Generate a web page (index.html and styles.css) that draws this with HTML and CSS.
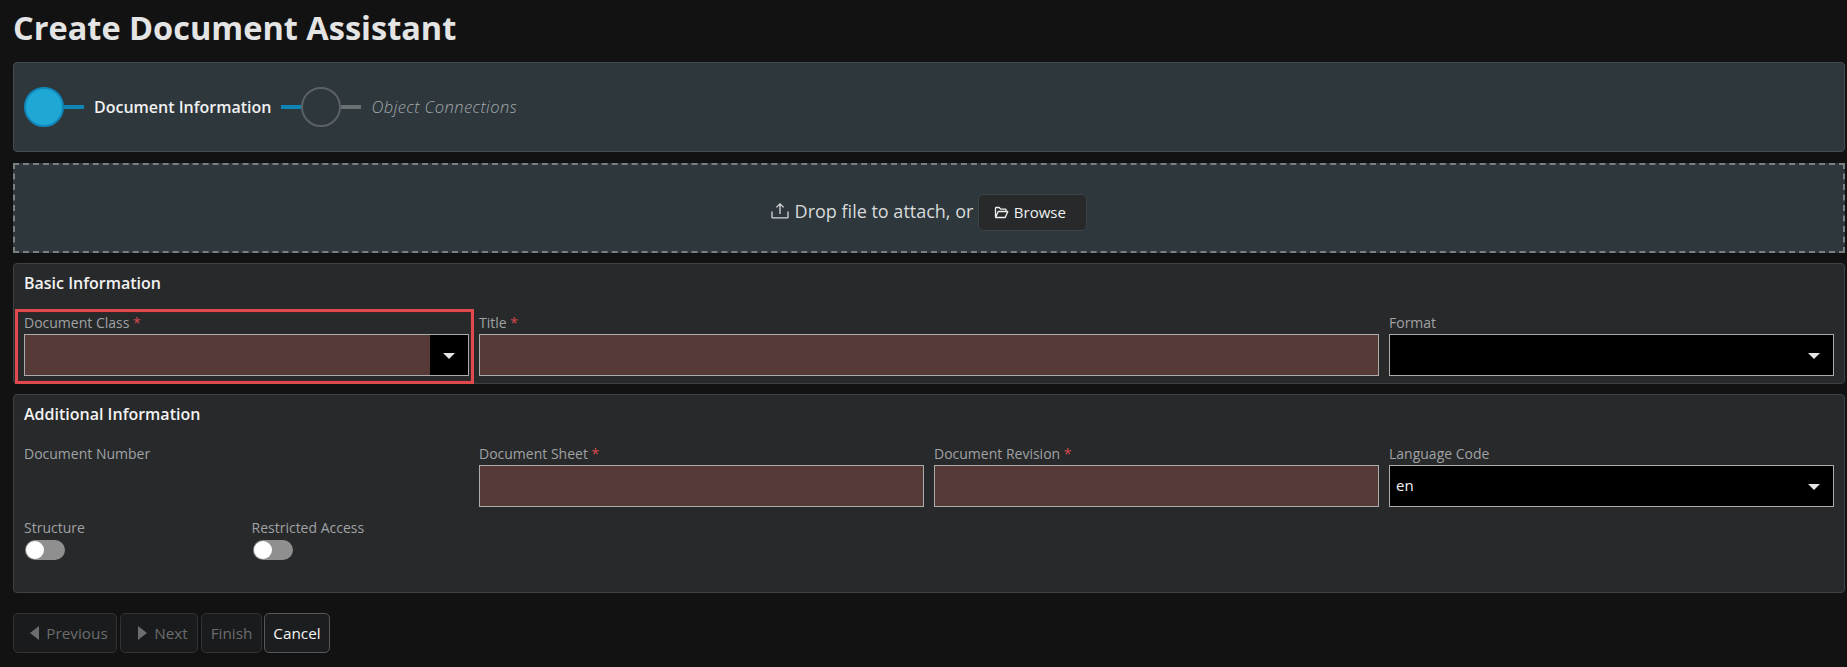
FILE: index.html
```html
<!DOCTYPE html>
<html lang="en">
<head>
<meta charset="utf-8">
<title>Create Document Assistant</title>
<link rel="stylesheet" href="styles.css">
</head>
<body>
<main class="page">
  <h1 class="page-title">Create Document Assistant</h1>

  <section class="stepper">
    <span class="step-circle step-circle-active"></span>
    <span class="step-line step-line-blue"></span>
    <span class="step-label step-label-active">Document Information</span>
    <span class="step-line step-line-blue"></span>
    <span class="step-circle"></span>
    <span class="step-line step-line-grey"></span>
    <span class="step-label step-label-next">Object Connections</span>
  </section>

  <section class="dropzone">
    <svg class="upload-icon" viewBox="0 0 18 17" width="18" height="17" aria-hidden="true">
      <path d="M9 12V2M5.4 5.4 9 1.8l3.6 3.6M1 9.5v5.7c0 .4.3.7.7.7h14.6c.4 0 .7-.3.7-.7V9.5" fill="none" stroke="currentColor" stroke-width="1.3"/>
    </svg>
    <span class="drop-text">Drop file to attach, or</span>
    <button class="browse-btn" type="button">
      <svg class="folder-icon" viewBox="0 0 15 13" width="15" height="13" aria-hidden="true">
        <path d="M1.5 10.8V2.2c0-.4.3-.7.7-.7h3l1.4 1.6h4.7c.4 0 .7.3.7.7v1.2M1.6 11.5h9.6l2.6-6H4.2z" fill="none" stroke="currentColor" stroke-width="1.3" stroke-linejoin="round"/>
      </svg>
      <span>Browse</span>
    </button>
  </section>

  <section class="panel panel-basic">
    <h2 class="panel-title">Basic Information</h2>
    <div class="form-grid">
      <div class="field span-2 field-focus">
        <span class="focus-ring"></span>
        <div class="field-label">Document Class <span class="req">*</span></div>
        <div class="control control-required">
          <span class="select-value"></span>
          <span class="select-arrow select-arrow-box"><span class="caret"></span></span>
        </div>
      </div>
      <div class="field span-4">
        <div class="field-label">Title <span class="req">*</span></div>
        <div class="control control-required"></div>
      </div>
      <div class="field span-2">
        <div class="field-label">Format</div>
        <div class="control control-black">
          <span class="select-value"></span>
          <span class="select-arrow"><span class="caret"></span></span>
        </div>
      </div>
    </div>
  </section>

  <section class="panel panel-additional">
    <h2 class="panel-title">Additional Information</h2>
    <div class="form-grid">
      <div class="field span-2">
        <div class="field-label">Document Number</div>
      </div>
      <div class="field span-2">
        <div class="field-label">Document Sheet <span class="req">*</span></div>
        <div class="control control-required"></div>
      </div>
      <div class="field span-2">
        <div class="field-label">Document Revision <span class="req">*</span></div>
        <div class="control control-required"></div>
      </div>
      <div class="field span-2">
        <div class="field-label">Language Code</div>
        <div class="control control-black">
          <span class="select-value">en</span>
          <span class="select-arrow"><span class="caret"></span></span>
        </div>
      </div>
      <div class="field">
        <div class="field-label">Structure</div>
        <span class="toggle"><span class="toggle-knob"></span></span>
      </div>
      <div class="field">
        <div class="field-label">Restricted Access</div>
        <span class="toggle"><span class="toggle-knob"></span></span>
      </div>
    </div>
  </section>

  <nav class="actions">
    <button class="action action-disabled action-prev" type="button"><span class="tri tri-left"></span>Previous</button>
    <button class="action action-disabled action-next" type="button"><span class="tri tri-right"></span>Next</button>
    <button class="action action-disabled action-finish" type="button">Finish</button>
    <button class="action action-cancel" type="button">Cancel</button>
  </nav>
</main>
</body>
</html>
```

FILE: styles.css
```css
* { box-sizing: border-box; }

html, body {
  margin: 0;
  background: #121212;
}

body {
  font-family: "Open Sans", "Noto Sans", sans-serif;
  color: #e6e6e6;
  height: 667px;
  overflow: hidden;
}

.page {
  padding: 0 2px 0 13px;
}

.page-title {
  margin: 0 0 6px;
  height: 56px;
  line-height: 56px;
  font-size: 32.5px;
  font-weight: 700;
  color: #e4e4e4;
}

.stepper {
  height: 90px;
  display: flex;
  align-items: center;
  padding: 0 10px;
  background: #2d373c;
  border: 1px solid #454c50;
  border-radius: 4px;
}

.step-circle {
  width: 40px;
  height: 40px;
  flex: none;
  border-radius: 50%;
  border: 2px solid #5a6266;
}

.step-circle-active {
  background: #1fa8d6;
  border-color: #1088b9;
}

.step-line {
  width: 20px;
  height: 4px;
  flex: none;
}

.step-line-blue { background: #0f85b5; }
.step-line-grey { background: #6b7073; }

.step-label {
  font-size: 16px;
  margin: 0 10px;
}

.step-label-active {
  margin-right: 9px;
  color: #f0f0f0;
  font-weight: 600;
}

.step-label-next {
  margin: -2px 10px 0 11px;
  color: #a4a8aa;
  font-size: 16.5px;
  letter-spacing: .42px;
  font-style: italic;
  font-weight: 300;
}

.dropzone {
  margin-top: 11px;
  height: 90px;
  padding-top: 8px;
  display: flex;
  align-items: center;
  justify-content: center;
  background: #2d373c;
  border: 2px dashed #7a7f82;
  font-size: 18px;
  color: #d8dadb;
}

.upload-icon {
  margin-right: 6px;
  margin-top: -3px;
}

.drop-text {
  margin-top: -2px;
}

.browse-btn {
  margin-left: 5px;
  width: 109px;
  height: 37px;
  padding: 0 6px 0 0;
  display: inline-flex;
  align-items: center;
  justify-content: center;
  gap: 5px;
  background: #27292b;
  border: 1px solid #3c4246;
  border-radius: 5px;
  color: #f0f0f0;
  font: 400 15px "Open Sans", sans-serif;
}

.panel {
  background: #27292b;
  border: 1px solid #3e4144;
  border-radius: 4px;
  padding: 8px 10px 7px;
}

.panel-basic {
  margin-top: 10px;
  height: 121px;
}

.panel-additional {
  margin-top: 10px;
  height: 199px;
}

.panel-title {
  margin: 0 0 17px;
  height: 24px;
  line-height: 22px;
  font-size: 16px;
  font-weight: 600;
  color: #f2f2f2;
}

.form-grid {
  display: grid;
  grid-template-columns: repeat(8, 1fr);
  column-gap: 10px;
  row-gap: 11px;
}

.field {
  position: relative;
  min-width: 0;
}

.span-2 { grid-column: span 2; }
.span-4 { grid-column: span 4; }

.field-label {
  height: 20px;
  margin-bottom: 1px;
  line-height: 20px;
  font-size: 14px;
  color: #a0a2a3;
}

.req { color: #d9494d; }

.control {
  height: 42px;
  display: flex;
  align-items: stretch;
  border: 1px solid #acacac;
}

.control-required { background: #553a38; }
.control-black { background: #000; }

.select-value {
  flex: 1;
  padding-left: 6px;
  line-height: 38px;
  font-size: 15px;
  color: #f2f2f2;
}

.select-arrow {
  width: 38px;
  display: flex;
  align-items: center;
  justify-content: center;
}

.select-arrow-box { background: #000; }

.caret {
  width: 0;
  height: 0;
  margin-top: 2px;
  border-left: 6px solid transparent;
  border-right: 6px solid transparent;
  border-top: 6px solid #e4e4e4;
}

.focus-ring {
  position: absolute;
  top: -4px;
  left: -9px;
  right: -5px;
  bottom: -8px;
  border: 3px solid #e04a4f;
  box-shadow: inset 0 0 0 1px #3d2426;
  pointer-events: none;
}

.toggle {
  display: block;
  position: relative;
  width: 40px;
  height: 20px;
  margin: 2px 0 0 1px;
  border-radius: 10px;
  background: #8f8f8f;
}

.toggle-knob {
  position: absolute;
  top: 1px;
  left: 1px;
  width: 18px;
  height: 18px;
  border-radius: 50%;
  background: #fff;
}

.actions {
  margin-top: 20px;
  display: flex;
}

.action {
  height: 40px;
  padding: 0;
  display: inline-flex;
  align-items: center;
  justify-content: center;
  background: #1a1b1c;
  border: 1px solid #303234;
  border-radius: 5px;
  font: 400 15.3px "Open Sans", sans-serif;
}

.action-disabled { color: #6b6d6e; }

.action-prev { width: 104px; margin-right: 3px; padding-left: 8px; }
.action-next { width: 78px; margin-right: 3px; padding-left: 8px; }
.action-finish { width: 61px; margin-right: 3px; }

.action-cancel {
  width: 66px;
  margin-left: -1px;
  color: #f4f4f4;
  background: #1c1d1e;
  border-color: #55585a;
}

.tri {
  width: 0;
  height: 0;
  margin-right: 7px;
  border-top: 7px solid transparent;
  border-bottom: 7px solid transparent;
}

.tri-left { border-right: 9px solid #6b6d6e; }
.tri-right { border-left: 9px solid #6b6d6e; }
```
